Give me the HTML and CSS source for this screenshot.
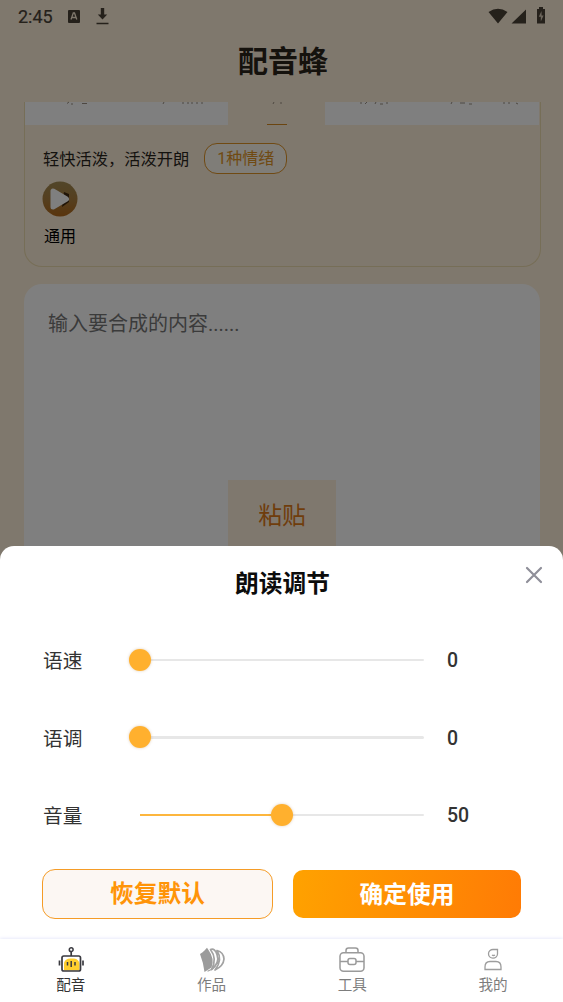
FILE: index.html
```html
<!DOCTYPE html>
<html lang="zh-CN">
<head>
<meta charset="utf-8">
<title>配音蜂</title>
<link rel="stylesheet" href="styles.css">
</head>
<body>
<div class="app">
  <main class="page">
    <header class="status">
      <span class="time">2:45</span>
      <svg class="lang" width="12" height="13" viewBox="0 0 12 13"><rect width="12" height="13" rx="1" fill="#4a4237"/><path d="M3 9.500 5.300 3h1.200l2.300 6.500M4 7.500h4" fill="none" stroke="#fff0d9" stroke-width="1.300"/></svg>
      <svg class="dl" width="13" height="17" viewBox="0 0 13 17" fill="#4a4237"><path d="M4.800 0h3.400v6.500h3L6.500 11.500 1.800 6.500h3zM.5 14.700h12v1.500H.5z"/></svg>
      <svg class="signals" width="58" height="18" viewBox="0 0 58 18" fill="#4a4237"><path d="M.5 5Q10 -1.500 19.500 5L10 16.500zM38 2.500v14H23.500zM49 2h2V0h4v2h2v14.500h-8z"/><path d="M53.500 4 50.800 9.700h2v4.800l2.800-6h-2z" fill="#d9ccb8"/></svg>
    </header>
    <h1 class="title">配音蜂</h1>
    <section class="voice">
      <div class="tabs">
        <span class="tab first"></span><span class="tab on"><i></i></span><span class="tab last"></span>
        <svg class="tab-marks" width="516" height="4" viewBox="0 0 516 4" fill="none" stroke="#9c9184"><path d="M42 2.500l2-1.500m2 2h2m9-.5h5M138 3l1-2M158 3v-2m5 2v-2m4 2v-2m5 2v-2m5 2v-2M248 3l1-2m7 2v-2M336 1v2m4 0 2-2m8 2 1-2m4 2h3m4 0v-2M426 3l1-2m8 1h5m4 1h3M479 3v-2m5 2v-2m7 1 2 1"/></svg>
      </div>
      <div class="mood">
        <span>轻快活泼，活泼开朗</span><span class="pill">1种情绪</span>
      </div>
      <div class="sample">
        <svg width="36" height="36" viewBox="0 0 36 36"><defs><linearGradient id="g" x2="0" y2="1"><stop stop-color="#a38c53"/><stop offset=".55" stop-color="#ab7d3c"/><stop offset="1" stop-color="#b3691a"/></linearGradient></defs><circle cx="18" cy="18" r="17.500" fill="url(#g)"/><path d="M22 11l5 2v8l-7 5z" fill="#40290e"/><path d="M11 10v16l13.500-8z" fill="#fff" stroke="#fff" stroke-width="5" stroke-linejoin="round"/></svg>
        <span>通用</span>
      </div>
    </section>
    <section class="editor">
      <p>输入要合成的内容......</p>
      <button class="paste">粘贴</button>
    </section>
  </main>
  <div class="scrim"></div>
  <div class="sheet">
    <div class="head"><h2>朗读调节</h2>
      <svg class="close" width="18" height="18" viewBox="0 0 18 18"><path d="M2 2l14 14M16 2 2 16" stroke="#8f8f99" stroke-width="2.200" stroke-linecap="round"/></svg>
    </div>
    <div class="row"><label>语速</label><div class="track"><b class="knob"></b></div><output>0</output></div>
    <div class="row"><label>语调</label><div class="track"><b class="knob"></b></div><output>0</output></div>
    <div class="row"><label>音量</label><div class="track"><b class="fill"></b><b class="knob"></b></div><output>50</output></div>
    <div class="actions"><button class="reset">恢复默认</button><button class="apply">确定使用</button></div>
  </div>
  <nav class="nav">
    <a class="active"><svg width="26" height="26" viewBox="0 0 26 26" fill="none" stroke="#3a3a40"><path d="M6 23.500V16Q7 11.500 12.500 11.500h3.500Q21 12 21.500 17v6.500z" fill="#ffcf2e" stroke="none"/><rect x="4" y="9" width="18.500" height="15" rx="1.800" stroke-width="1.700"/><circle cx="13.200" cy="2.700" r="1.900" stroke-width="1.500"/><path d="M13.200 4.800V9M1.500 13.500v5M25 13.500v5" stroke-width="1.700"/><path d="M9.500 15v3.500M13.200 14v6M17 15v3.500" stroke-width="1.500"/></svg>配音</a>
    <a><svg width="26" height="26" viewBox="0 0 26 26"><path d="M1 7Q4 5 5.500 3.500L8 .8 9.500 3Q16 12 12.500 20.500L5.500 25Q4.500 16 1 7z" fill="#9b9b9b"/><path d="M11.500 2.500Q22.500 12 13.500 22L8.500 24.300" fill="none" stroke="#a2a2a2" stroke-width="1.200"/><path d="M11.500 2.500Q16 1 18 7.500Q21 16 12.500 22.500Q18.500 12 11.500 2.500zM18 3.500Q24.500 5 25 12Q24.500 19 16 23Q24 13 18 3.500z" fill="#fff" stroke="#a2a2a2" stroke-width="1.700" stroke-linejoin="round"/></svg>作品</a>
    <a><svg width="26" height="26" viewBox="0 0 26 26" fill="none" stroke="#9a9a9a" stroke-width="1.500"><rect x="1" y="5.700" width="24" height="18.500" rx="3.500"/><path d="M7 5.700V3.500Q7 1 9.500 1h7Q19 1 19 3.500v2.200M1 14.500h8m8 0h8"/><rect x="9" y="11.500" width="8" height="6" rx="2"/></svg>工具</a>
    <a><svg width="26" height="26" viewBox="0 0 26 26" fill="none" stroke="#9d9d9d" stroke-width="1.300"><path d="M17.500 2.500v4.500A4.500 4.300 0 1 1 13 2.500zM12 8q1.500 1 3 0M5 22.500v-2.500q0-5.500 5-5.500h6q5 0 5 5.500v2.500z"/></svg>我的</a>
  </nav>
</div>
</body>
</html>
```
FILE: styles.css
```css
* { box-sizing: border-box; }
body { margin: 0; font-family: Roboto, "Noto Sans CJK SC", sans-serif; }
h1, h2, p { margin: 0; }
button { font: inherit; padding: 0; border: 0; }
svg { display: block; flex: none; }
.app { position: relative; width: 563px; height: 1002px; overflow: hidden; display: flex; flex-direction: column; background: #fff; }
.page { flex: 1; min-height: 0; overflow: hidden; background: linear-gradient(#fff0da, #fff0da 45%, #fdf0dc); }
.status { height: 32px; padding: 0 18px; display: flex; align-items: center; color: #4a4237; }
.time { font-size: 18px; font-weight: 400; width: 50px; -webkit-text-stroke: .2px; }
.dl { margin-left: 16px; }
.signals { margin-left: auto; margin-right: -1px; }
.title { height: 70px; line-height: 59px; text-align: center; font-size: 30px; font-weight: 700; color: #2a241b; padding-left: 3px; }
.voice { width: 517px; height: 165px; margin-left: 24px; border: 1px solid #eddcae; border-top: 0; border-radius: 0 0 18px 18px; }
.tabs { position: relative; display: flex; height: 23px; }
.tab { background: #fff; }
.first { width: 203px; }
.on { width: 97px; background: none; display: flex; align-items: flex-end; justify-content: center; }
.on i { width: 20px; height: 1.500px; background: #d78a20; }
.last { flex: 1; margin-right: 1px; }
.tab-marks { position: absolute; left: 0; top: -1px; }
.mood { height: 31px; margin: 18px 0 0 18px; display: flex; align-items: center; gap: 15px; font-size: 16.250px; color: #29251c; }
.mood span:first-child { margin-top: -2px; }
.pill { width: 83px; height: 31px; line-height: 30px; border: 1.500px solid #e09427; border-radius: 13px; background: #fffaf0; color: #e09427; text-align: center; font-size: 16px; }
.sample { margin: 7px 0 0 17px; display: flex; flex-direction: column; font-size: 16px; line-height: 24px; color: #000; }
.sample span { margin: 8px 0 0 2px; }
.editor { margin: 17px 23px 0 24px; height: 680px; border-radius: 18px; background: #fff; padding: 25px 24px 0; font-size: 20px; line-height: 30px; color: #777; }
.paste { display: block; width: 108px; height: 90px; margin: 141px auto 0; padding-bottom: 19px; background: #fff0dd; color: #df7b19; font-size: 23.800px; }
.scrim { position: absolute; inset: 0; background: rgba(0, 0, 0, .5); }
.sheet { position: absolute; left: 0; right: 0; bottom: 63px; height: 393px; background: #fff; border-radius: 14px 14px 0 0; }
.head { height: 75px; position: relative; text-align: center; }
.head h2 { font-size: 23.700px; font-weight: 700; line-height: 76px; padding-left: 2px; color: #0c0c0c; }
.close { position: absolute; right: 20px; top: 20px; }
.row { height: 77.600px; padding-left: 43px; display: flex; align-items: center; font-size: 19.700px; color: #333; }
.row label { width: 97px; }
.track { position: relative; width: 284px; height: 2.500px; background: #e7e7e7; border-radius: 2px; }
.fill { display: block; width: 50%; height: 100%; background: #fdb63d; }
.knob { position: absolute; left: 0; top: 50%; width: 22px; height: 22px; border-radius: 50%; background: #ffb02e; transform: translate(-50%, -50%); box-shadow: 0 0 3px rgba(160, 90, 0, .3); }
.fill + .knob { left: 50%; }
.row output { margin: 2px 0 0 23px; font-weight: 500; font-size: 19.500px; }
.actions { display: flex; gap: 20px; padding: 15px 42px 0; height: 66px; }
.actions button { height: 50px; font-size: 23.700px; font-weight: 700; border-radius: 13px; padding-bottom: 3px; }
.reset { width: 231px; border: 1.500px solid #f59c27; background: #fcf7f3; color: #ff9408; }
.actions .apply { width: 228px; height: 48px; margin-top: 1px; padding-bottom: 2px; background: linear-gradient(100deg, #ffa200, #ff7b05); color: #fff; border-radius: 10px; }
.nav { position: relative; height: 63px; display: grid; grid-template-columns: repeat(4, 1fr); background: #fff; box-shadow: 0 -1px 3px #e9ebfb; }
.nav a { display: flex; flex-direction: column; align-items: center; padding: 8px 0 0 1px; font-size: 14.600px; line-height: 21px; color: #7d7d7d; gap: 2px; }
.nav .active { color: #333; }
```
